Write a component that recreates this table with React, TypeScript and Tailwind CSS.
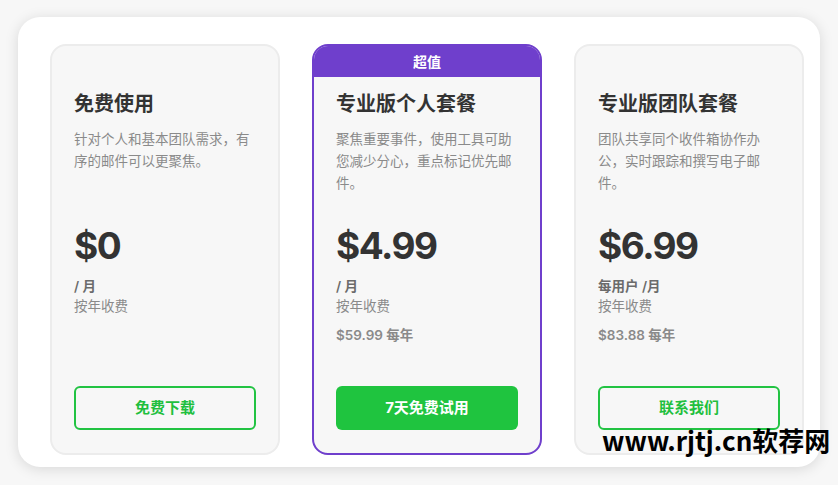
import type { ReactNode } from "react";

const FONT = { fontFamily: 'Inter, "Noto Sans CJK SC", sans-serif' };

interface Plan {
  name: string;
  desc: string[];
  price: string;
  unit: string;
  yearly?: string;
  cta: string;
  featured?: boolean;
}

// line breaks follow the original layout
const plans: Plan[] = [
  {
    name: "免费使用",
    desc: ["针对个人和基本团队需求，有", "序的邮件可以更聚焦。"],
    price: "$0",
    unit: "/ 月",
    cta: "免费下载",
  },
  {
    name: "专业版个人套餐",
    desc: ["聚焦重要事件，使用工具可助", "您减少分心，重点标记优先邮", "件。"],
    price: "$4.99",
    unit: "/ 月",
    yearly: "$59.99 每年",
    cta: "7天免费试用",
    featured: true,
  },
  {
    name: "专业版团队套餐",
    desc: ["团队共享同个收件箱协作办", "公，实时跟踪和撰写电子邮", "件。"],
    price: "$6.99",
    unit: "每用户 /月",
    yearly: "$83.88 每年",
    cta: "联系我们",
  },
];

const PlanCard = ({ plan }: { plan: Plan }) => {
  let header: ReactNode = <div className="h-[31px]" />;
  if (plan.featured) {
    header = (
      <div className="h-[31px] bg-[#6f3fcc] flex items-center justify-center text-white text-[14px] font-bold">
        超值
      </div>
    );
  }

  return (
    <div
      className={`w-[230px] h-[411px] rounded-[16px] border-2 overflow-hidden flex flex-col bg-[#f7f7f7] ${
        plan.featured ? "border-[#6f3fcc]" : "border-[#ececec]"
      }`}
    >
      {header}
      <div className="flex-1 flex flex-col px-[22px] pb-[23px]">
        <h2 className="mt-[13px] text-[20px] leading-[28px] font-bold text-[#333]">{plan.name}</h2>
        <div className="mt-[10px] h-[66px] text-[13.5px] leading-[22px] text-[#8a8a8a]">
          {plan.desc.map((line) => (
            <div key={line} className="whitespace-nowrap">
              {line}
            </div>
          ))}
        </div>
        <div className="mt-[33px] text-[37px] leading-[38px] font-bold text-[#333] tracking-[-1.5px]">
          {plan.price}
        </div>
        <div className="mt-[11px] text-[13.5px] leading-[20px] font-semibold text-[#6b6b6b]">{plan.unit}</div>
        <div className="text-[13.5px] leading-[20px] text-[#8a8a8a]">按年收费</div>
        {plan.yearly && (
          <div className="mt-[9px] text-[13.5px] leading-[20px] font-semibold text-[#8a8a8a]">{plan.yearly}</div>
        )}
        {plan.featured ? (
          <button className="mt-auto h-[44px] w-full rounded-[6px] bg-[#1fc43f] text-white text-[15px] font-bold">
            {plan.cta}
          </button>
        ) : (
          <button className="mt-auto h-[44px] w-full rounded-[6px] border-2 border-[#22c343] text-[#1fbf3e] text-[15px] font-bold">
            {plan.cta}
          </button>
        )}
      </div>
    </div>
  );
};

export default function App() {
  return (
    <div className="relative w-[838px] h-[485px] bg-[#f7f7f7] pt-[17px] pl-[18px] overflow-hidden" style={FONT}>
      <div className="w-[802px] h-[450px] rounded-[22px] bg-white shadow-[0_2px_14px_rgba(0,0,0,0.13)] pl-[32px] pt-[27px] flex gap-[32px]">
        {plans.map((p) => (
          <PlanCard key={p.name} plan={p} />
        ))}
      </div>
      {/* watermark */}
      <div
        className="absolute left-[602px] top-[424px] text-[26px] leading-[32px] font-bold text-black whitespace-nowrap"
        style={{ fontFamily: '"Noto Sans CJK SC", sans-serif' }}
      >
        www.rjtj.cn软荐网
      </div>
    </div>
  );
}
